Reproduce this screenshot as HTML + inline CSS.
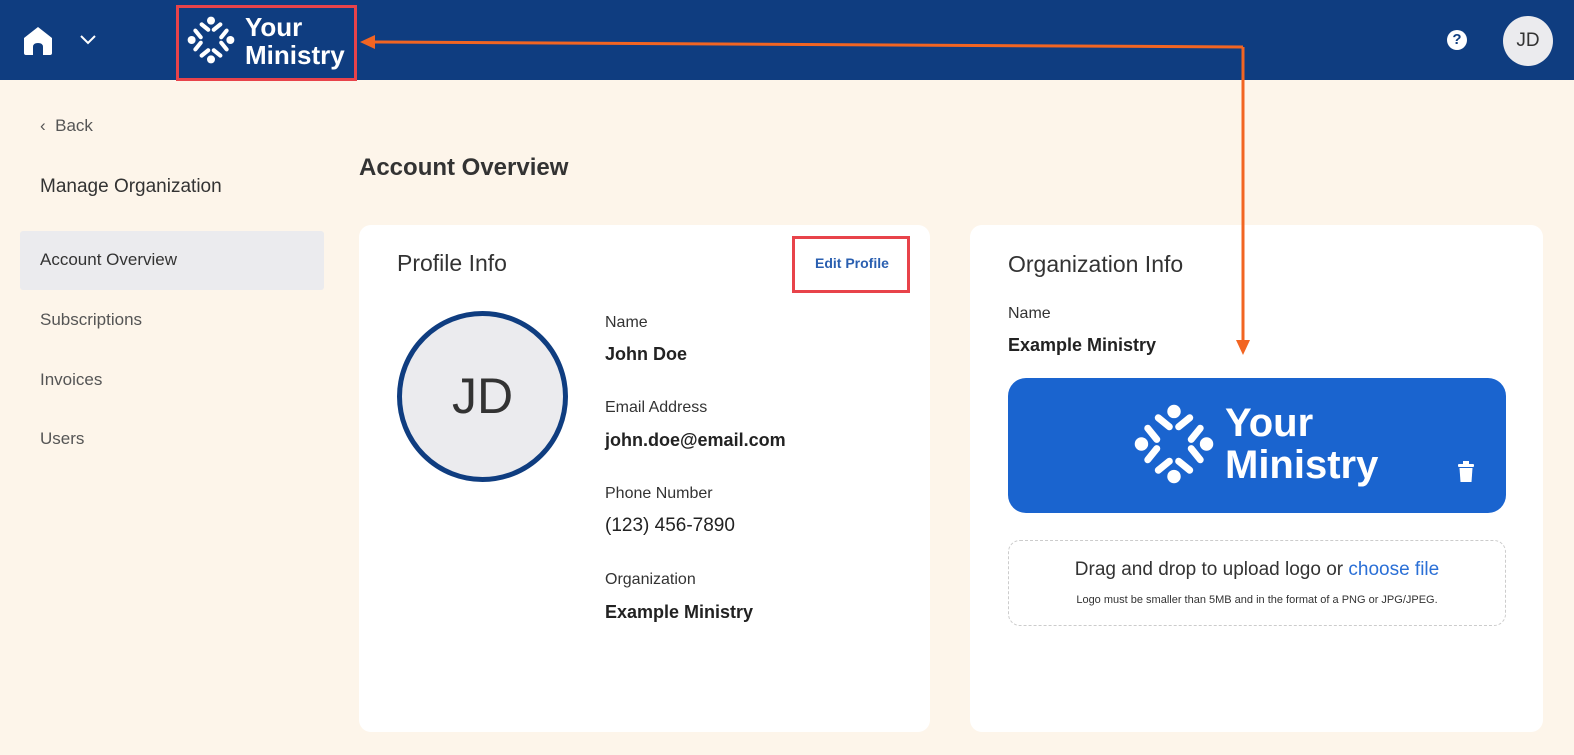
<!DOCTYPE html>
<html><head><meta charset="utf-8"><style>
*{box-sizing:border-box;margin:0;padding:0}
body{width:1574px;height:755px;overflow:hidden;background:#fdf5ea;font-family:"Liberation Sans",sans-serif;color:#222;position:relative}
.hdr{position:absolute;left:0;top:0;width:1574px;height:80px;background:#0f3d80}
.a{position:absolute}
.card{position:absolute;background:#fff;border-radius:12px}
.lbl{font-size:16px;color:#333}
.val{font-size:18px;font-weight:bold;color:#222}
</style></head><body>
<svg width="0" height="0" style="position:absolute"><defs>
<g id="arm"><circle cx="20" cy="4.5" r="3.2" stroke="none"/><line x1="12.5" y1="7.5" x2="17.8" y2="11.8"/><line x1="22.2" y1="11.8" x2="27.5" y2="7.5"/></g>
<g id="ico" fill="#fff" stroke="#fff" stroke-width="3.3" stroke-linecap="round">
<use href="#arm"/><use href="#arm" transform="rotate(90 20 20)"/><use href="#arm" transform="rotate(180 20 20)"/><use href="#arm" transform="rotate(270 20 20)"/>
</g></defs></svg>
<div class="hdr"></div>
<svg class="a" style="left:22px;top:25px" width="32" height="32" viewBox="0 0 32 32"><path d="M16 2 L30 13 V28 Q30 30 28 30 H21 V22 Q21 18 16 18 Q11 18 11 22 V30 H4 Q2 30 2 28 V13 Z" fill="#fff"/></svg>
<svg class="a" style="left:79px;top:34px" width="18" height="12" viewBox="0 0 18 12"><path d="M2 2 L9 9 L16 2" stroke="#fff" stroke-width="2" fill="none"/></svg>
<div class="a" style="left:176px;top:5px;width:181px;height:76px;border:3px solid #e8434a"></div>
<svg class="a" style="left:186px;top:15px" width="50" height="50" viewBox="0 0 40 40"><use href="#ico"/></svg>
<div class="a" style="left:245px;top:13px;color:#fff;font-weight:bold;font-size:26px;line-height:28px">Your<br>Ministry</div>
<div class="a" style="left:1447px;top:30px;width:20px;height:20px;border-radius:50%;background:#fff;color:#0f3d80;font-weight:bold;font-size:15px;text-align:center;line-height:20px">?</div>
<div class="a" style="left:1503px;top:16px;width:50px;height:50px;border-radius:50%;background:#ebebee;color:#333;font-size:19px;text-align:center;line-height:50px">JD</div>
<div class="a" style="left:40px;top:116px;font-size:17px;color:#555">&#8249;&nbsp;&nbsp;Back</div>
<div class="a" style="left:40px;top:176px;font-size:19px;color:#333;font-weight:500">Manage Organization</div>
<div class="a" style="left:20px;top:231px;width:304px;height:59px;background:#ebebee;border-radius:3px"></div>
<div class="a" style="left:40px;top:250px;font-size:17px;color:#333">Account Overview</div>
<div class="a" style="left:40px;top:310px;font-size:17px;color:#555">Subscriptions</div>
<div class="a" style="left:40px;top:370px;font-size:17px;color:#555">Invoices</div>
<div class="a" style="left:40px;top:429px;font-size:17px;color:#555">Users</div>
<div class="a" style="left:359px;top:154px;font-size:24px;font-weight:bold;color:#333">Account Overview</div>
<div class="card" style="left:359px;top:225px;width:571px;height:507px"></div>
<div class="a" style="left:397px;top:250px;font-size:23px;color:#333">Profile Info</div>
<div class="a" style="left:792px;top:236px;width:118px;height:57px;border:3px solid #e8434a"></div>
<div class="a" style="left:815px;top:255px;font-size:14px;font-weight:bold;color:#2a5fb0">Edit Profile</div>
<div class="a" style="left:397px;top:311px;width:171px;height:171px;border-radius:50%;border:5px solid #0f3d80;background:#ebebee;text-align:center;line-height:161px;font-size:50px;color:#333">JD</div>
<div class="a lbl" style="left:605px;top:314px">Name</div><div class="a val" style="left:605px;top:344px">John Doe</div>
<div class="a lbl" style="left:605px;top:399px">Email Address</div><div class="a val" style="left:605px;top:430px">john.doe@email.com</div>
<div class="a lbl" style="left:605px;top:485px">Phone Number</div><div class="a val" style="left:605px;top:515px;font-weight:normal;font-size:19px">(123) 456-7890</div>
<div class="a lbl" style="left:605px;top:571px">Organization</div><div class="a val" style="left:605px;top:602px">Example Ministry</div>
<div class="card" style="left:970px;top:225px;width:573px;height:507px"></div>
<div class="a" style="left:1008px;top:251px;font-size:23px;color:#333">Organization Info</div>
<div class="a lbl" style="left:1008px;top:305px">Name</div><div class="a val" style="left:1008px;top:335px">Example Ministry</div>
<div class="a" style="left:1008px;top:378px;width:498px;height:135px;background:#1a64cf;border-radius:18px"></div>
<svg class="a" style="left:1132px;top:402px" width="84" height="84" viewBox="0 0 40 40"><use href="#ico"/></svg>
<div class="a" style="left:1225px;top:402px;color:#fff;font-weight:bold;font-size:40px;line-height:42px">Your<br>Ministry</div>
<svg class="a" style="left:1457px;top:461px" width="18" height="22" viewBox="0 0 18 22"><rect x="1" y="3" width="16" height="3" rx="1" fill="#fff"/><rect x="6" y="0" width="6" height="3" fill="#fff"/><path d="M2.5 7 H15.5 L14.5 21 H3.5 Z" fill="#fff"/></svg>
<div class="a" style="left:1008px;top:540px;width:498px;height:86px;border:1px dashed #ccc;border-radius:12px"></div>
<div class="a" style="left:1008px;top:559px;width:498px;text-align:center;font-size:19px;color:#333">Drag and drop to upload logo or <span style="color:#2a6fd6">choose file</span></div>
<div class="a" style="left:1008px;top:594px;width:498px;text-align:center;font-size:11px;color:#333">Logo must be smaller than 5MB and in the format of a PNG or JPG/JPEG.</div>
<svg class="a" style="left:355px;top:30px" width="900" height="330"><g stroke="#f26522" stroke-width="3" fill="#f26522">
<line x1="18" y1="12" x2="888" y2="17"/><line x1="888" y1="17" x2="888" y2="312"/>
<polygon points="5,12 20,5 20,19" stroke="none"/><polygon points="881,310 895,310 888,325" stroke="none"/></g></svg>
</body></html>
